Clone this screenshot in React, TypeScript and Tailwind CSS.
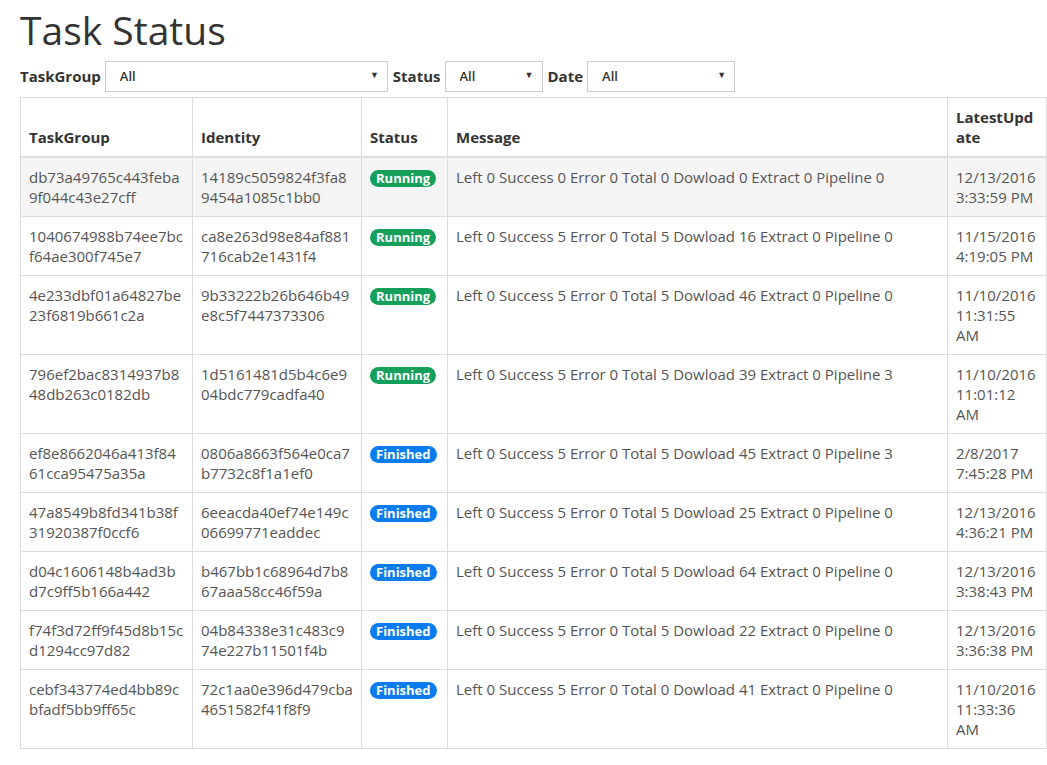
import React from 'react';

type Task = {
  group: string;
  identity: string;
  status: 'Running' | 'Finished';
  message: string;
  updated: string;
};

const tasks: Task[] = [
  { group: 'db73a49765c443feba9f044c43e27cff', identity: '14189c5059824f3fa89454a1085c1bb0', status: 'Running', message: 'Left 0 Success 0 Error 0 Total 0 Dowload 0 Extract 0 Pipeline 0', updated: '12/13/2016 3:33:59 PM' },
  { group: '1040674988b74ee7bcf64ae300f745e7', identity: 'ca8e263d98e84af881716cab2e1431f4', status: 'Running', message: 'Left 0 Success 5 Error 0 Total 5 Dowload 16 Extract 0 Pipeline 0', updated: '11/15/2016 4:19:05 PM' },
  { group: '4e233dbf01a64827be23f6819b661c2a', identity: '9b33222b26b646b49e8c5f7447373306', status: 'Running', message: 'Left 0 Success 5 Error 0 Total 5 Dowload 46 Extract 0 Pipeline 0', updated: '11/10/2016 11:31:55 AM' },
  { group: '796ef2bac8314937b848db263c0182db', identity: '1d5161481d5b4c6e904bdc779cadfa40', status: 'Running', message: 'Left 0 Success 5 Error 0 Total 5 Dowload 39 Extract 0 Pipeline 3', updated: '11/10/2016 11:01:12 AM' },
  { group: 'ef8e8662046a413f8461cca95475a35a', identity: '0806a8663f564e0ca7b7732c8f1a1ef0', status: 'Finished', message: 'Left 0 Success 5 Error 0 Total 5 Dowload 45 Extract 0 Pipeline 3', updated: '2/8/2017 7:45:28 PM' },
  { group: '47a8549b8fd341b38f31920387f0ccf6', identity: '6eeacda40ef74e149c06699771eaddec', status: 'Finished', message: 'Left 0 Success 5 Error 0 Total 5 Dowload 25 Extract 0 Pipeline 0', updated: '12/13/2016 4:36:21 PM' },
  { group: 'd04c1606148b4ad3bd7c9ff5b166a442', identity: 'b467bb1c68964d7b867aaa58cc46f59a', status: 'Finished', message: 'Left 0 Success 5 Error 0 Total 5 Dowload 64 Extract 0 Pipeline 0', updated: '12/13/2016 3:38:43 PM' },
  { group: 'f74f3d72ff9f45d8b15cd1294cc97d82', identity: '04b84338e31c483c974e227b11501f4b', status: 'Finished', message: 'Left 0 Success 5 Error 0 Total 5 Dowload 22 Extract 0 Pipeline 0', updated: '12/13/2016 3:36:38 PM' },
  { group: 'cebf343774ed4bb89cbfadf5bb9ff65c', identity: '72c1aa0e396d479cba4651582f41f8f9', status: 'Finished', message: 'Left 0 Success 5 Error 0 Total 0 Dowload 41 Extract 0 Pipeline 0', updated: '11/10/2016 11:33:36 AM' },
];

const Filter = ({ label, width }: { label: string; width: string }) => (
  <div className="flex items-center">
    <label className="text-[15px] font-bold text-[#333] mr-[4px]">{label}</label>
    <div className={`relative ${width}`}>
      <select
        title={label}
        className="appearance-none w-full h-[31px] border border-[#ccc] bg-white pl-[14px] text-[13px] font-semibold text-[#333] outline-none"
      >
        <option>All</option>
      </select>
      <span className="pointer-events-none absolute right-[9px] top-[7px] text-[9px] text-[#333]">▼</span>
    </div>
  </div>
);

const App: React.FC = () => {
  return (
    <div className="min-h-screen bg-white pl-[20px] pt-[6px] font-['Open_Sans',sans-serif] text-[15px] text-[#555]">
      <h1 className="text-[39px] leading-[48px] font-normal text-[#333]">Task Status</h1>

      <div className="flex items-center gap-[5px] mt-[7px]">
        <Filter label="TaskGroup" width="w-[283px]" />
        <Filter label="Status" width="w-[98px]" />
        <Filter label="Date" width="w-[148px]" />
      </div>

      <table className="mt-[5px] w-[1026px] table-fixed border-collapse border border-[#ddd]">
        <colgroup>
          <col className="w-[172px]" />
          <col className="w-[169px]" />
          <col className="w-[86px]" />
          <col className="w-[500px]" />
          <col className="w-[99px]" />
        </colgroup>
        <thead>
          <tr className="border-b-2 border-[#ddd]">
            {['TaskGroup', 'Identity', 'Status', 'Message', 'LatestUpdate'].map((h) => (
              <th key={h} className="border border-[#ddd] border-b-2 px-[8px] py-[9px] text-left align-bottom font-bold text-[#333] leading-5 break-all">
                {h}
              </th>
            ))}
          </tr>
        </thead>
        <tbody>
          {tasks.map((t, i) => (
            <tr key={t.group} className={i === 0 ? 'bg-[#f5f5f5]' : ''}>
              <td className="border border-[#ddd] px-[8px] py-[9px] align-top leading-5 break-all">{t.group}</td>
              <td className="border border-[#ddd] px-[8px] py-[9px] align-top leading-5 break-all">{t.identity}</td>
              <td className="border border-[#ddd] px-[8px] py-[9px] align-top leading-5">
                <span
                  className={`inline-block rounded-full px-[6px] text-[13px] leading-[17px] font-bold text-white ${
                    t.status === 'Running' ? 'bg-[#14a05a]' : 'bg-[#0a7cf0]'
                  }`}
                >
                  {t.status}
                </span>
              </td>
              <td className="border border-[#ddd] px-[8px] py-[9px] align-top leading-5">{t.message}</td>
              <td className="border border-[#ddd] px-[8px] py-[9px] align-top leading-5">{t.updated}</td>
            </tr>
          ))}
        </tbody>
      </table>
    </div>
  );
};

export default App;
